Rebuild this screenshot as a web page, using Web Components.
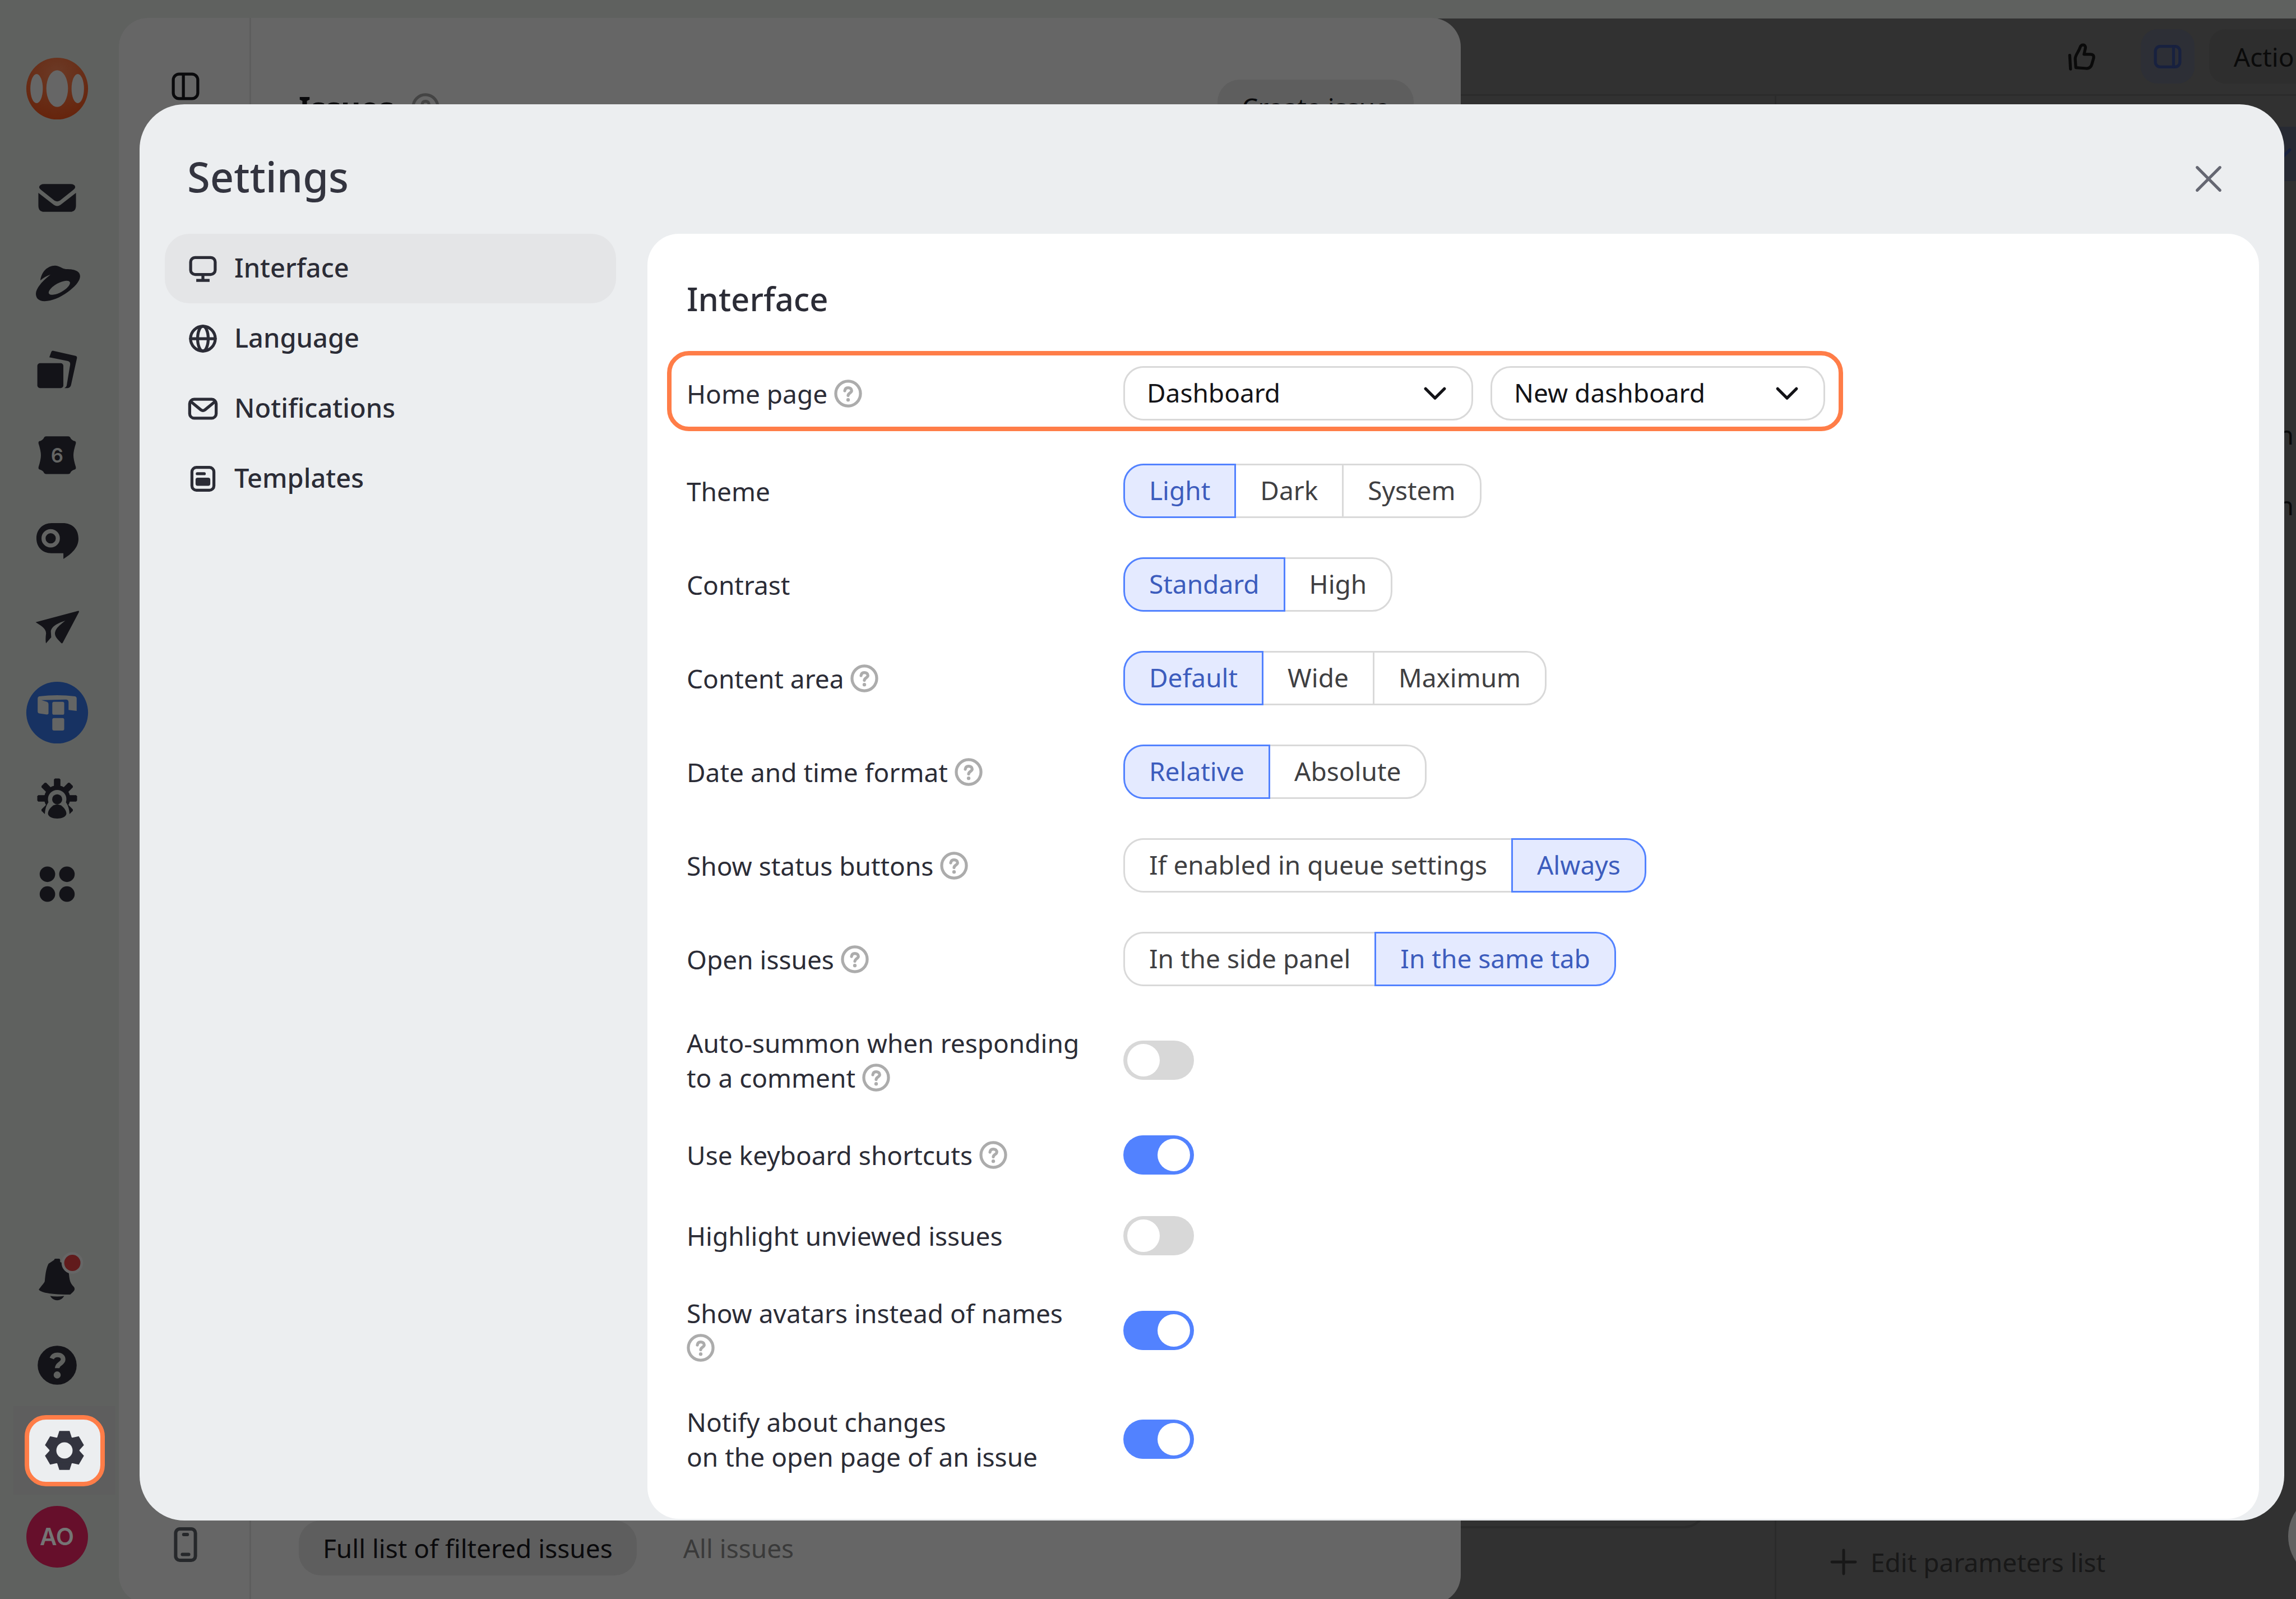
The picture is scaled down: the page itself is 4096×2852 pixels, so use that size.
<!DOCTYPE html>
<html lang="en">
<head>
<meta charset="utf-8">
<title>Settings</title>
<style>
  html, body {
    height: 100%;
    margin: 0;
  }
  body {
    --ink: #2b2c36;
    --rail: #5f615f;
    --line: #d9d9d9;
    --accent: #5282ff;
    --mark: #ff7d48;
    position: relative;
    display: flex;
    overflow: hidden;
    background: var(--rail);
    color: var(--ink);
    font: 46px/62px "Noto Sans", "Open Sans", sans-serif;
  }
</style>
</head>
<body>
  <app-rail></app-rail>
  <issues-drawer></issues-drawer>
  <issue-page></issue-page>

  <settings-dialog heading="Settings">
    <settings-nav slot="nav">
      <nav-item icon="display" active>Interface</nav-item>
      <nav-item icon="globe">Language</nav-item>
      <nav-item icon="envelope">Notifications</nav-item>
      <nav-item icon="template">Templates</nav-item>
    </settings-nav>

    <settings-section heading="Interface">
      <setting-select label="Home page" help highlighted options="Dashboard|New dashboard"></setting-select>
      <setting-radio label="Theme" options="Light|Dark|System" value="Light"></setting-radio>
      <setting-radio label="Contrast" options="Standard|High" value="Standard"></setting-radio>
      <setting-radio label="Content area" help options="Default|Wide|Maximum" value="Default"></setting-radio>
      <setting-radio label="Date and time format" help options="Relative|Absolute" value="Relative"></setting-radio>
      <setting-radio label="Show status buttons" help options="If enabled in queue settings|Always" value="Always"></setting-radio>
      <setting-radio label="Open issues" help options="In the side panel|In the same tab" value="In the same tab"></setting-radio>
      <setting-switch label="Auto-summon when responding to a comment" help></setting-switch>
      <setting-switch label="Use keyboard shortcuts" help checked></setting-switch>
      <setting-switch label="Highlight unviewed issues"></setting-switch>
      <setting-switch label="Show avatars instead of names" help checked></setting-switch>
      <setting-switch label="Notify about changes&#10;on the open page of an issue" checked></setting-switch>
    </settings-section>
  </settings-dialog>

<script>
// Line icons on a 16px grid.
const lineIcons = {
  display: '<rect x="1.75" y="2.4" width="12.5" height="8.6" rx="2.25"/><path d="M8 11v2.8M4.6 14h6.8" stroke-linecap="butt"/>',
  globe: '<circle cx="8" cy="8" r="6.3"/><ellipse cx="8" cy="8" rx="2.7" ry="6.3"/><path d="M1.7 8h12.6"/>',
  envelope: '<rect x="1.25" y="3.2" width="13.5" height="9.6" rx="2.25"/><path d="M2 4.5 7 8.6q1 .7 2 0L14 4.5"/>',
  template: '<rect x="2.4" y="2.2" width="11.2" height="11.6" rx="2.25"/><path d="M5.1 5.4h3.6"/><rect x="5" y="8.2" width="6" height="2.6" rx=".3" fill="currentColor"/>',
  panelLeft: '<rect x="1.75" y="1.75" width="12.5" height="12.5" rx="3"/><path d="M6.9 2v12"/>',
  panelRight: '<rect x="1.75" y="2.75" width="12.5" height="10.5" rx="2.5"/><path d="M11 3v10"/>',
  phone: '<rect x="3.6" y="1" width="8.8" height="14" rx="1.9"/><path d="M7.2 3.5h1.6M6.6 12.4h2.8"/>',
  thumb: '<path d="M2.1 7.3l.4 7"/><path d="M5.2 13.6 4.9 9.2C4.9 7 6.8 5.5 7.4 3.2c.5-1.7 3-1.5 2.7.4l-.7 3.2h3.2c1.4 0 2 .8 1.6 2.2l-.8 2.8c-.4 1.5-1.4 2.3-2.9 2.2z"/>',
  close: '<path d="M2.2 2.2l11.6 11.6M13.8 2.2 2.2 13.8" stroke-width="1.5"/>',
  chevron: '<path d="M3.2 5.8 8 10.6l4.8-4.8"/>',
  plus: '<path d="M8 2v12M2 8h12" stroke-width="1.4"/>',
  help: '<circle cx="8" cy="8" r="6.3"/><path d="M6.3 6.6C6.4 5.5 7.1 5 8 5s1.8.6 1.8 1.5C9.8 7.7 8.1 7.7 8 9"/><circle cx="8" cy="11.2" r=".9" fill="currentColor" stroke="none"/>',
};

const icon = name => `
  <svg class="icon" viewBox="0 0 16 16" aria-hidden="true" fill="none" stroke="currentColor"
    stroke-width="1.5" stroke-linecap="round" stroke-linejoin="round">${lineIcons[name]}</svg>
`;

const teeth = (angles, points) =>
  angles.map(a => `<polygon points="${points}" transform="rotate(${a} 60 60)"/>`).join('');

// Filled service icons on a 120px grid.
const railIcons = {
  logo: `
    <radialGradient id="g" cx=".5" cy=".25" r=".75"><stop offset="0" stop-color="#6b3a26"/><stop offset="1" stop-color="#66240c"/></radialGradient>
    <circle cx="60" cy="60" r="57" fill="url(#g)"/>
    <g fill="#666"><ellipse cx="60" cy="60" rx="20" ry="34"/><ellipse cx="22" cy="60" rx="11.5" ry="27"/><ellipse cx="98" cy="60" rx="11.5" ry="27"/></g>`,
  mail: `
    <path d="M36 34.3H84Q93 34.3 93.3 40 93 43 90 45L65 65Q60 68 55 65L30 45Q27 43 26.7 40 28 34.3 36 34.3Z"/>
    <path d="M25.3 50.7 54 73Q60 77 66 73L94.7 50.7V74Q94.7 85.7 84 85.7H36Q25.3 85.7 25.3 74Z"/>`,
  disk: `
    <path d="M29 54C31 38 42 27 56 26.7 64 26.7 70 33 76 33 86 33 102 34 102.3 46 102 56 92 66 80 75 65 86 50 92 36.7 92.3 26 92 20.7 87 20.7 78.3 21 68 33 55 47.7 43.3Q37 47 29 54Z"/>
    <ellipse cx="64" cy="67.5" rx="22" ry="8.5" transform="rotate(-29 64 67.5)" fill="#5f615f"/>`,
  docs: `
    <rect x="23.4" y="48.4" width="48" height="46" rx="5"/>
    <path d="M45.5 37.5 49 28Q50 25 53 25.5L94 35Q97 36 96.5 39L85.5 89Q84 94.3 79 94.3H73.5Q76.5 93 77.5 90L84 51Q84.5 46 80 44.5Z"/>`,
  calendar: `
    <path d="M40 25.2H80Q84 25.5 85 29 89 34 93 34 95 35 94.5 38 90 52 90 60 90 68 94.5 82 95 85 93 86 88 87 85 91 84 94.7 80 94.7H40Q36 94.5 35 91 32 87 27 86 25 85 25.5 82 30 68 30 60 30 52 25.5 38 25 35 27 34 31 34 35 29 36 25.5 40 25.2Z"/>
    <text x="60" y="73" text-anchor="middle" font-family="Inter" font-weight="600" font-size="36" fill="#646564">6</text>`,
  chat: `
    <path d="M50 27H70C88 27 99.3 38 99.3 56 99.3 72 86 84 71.5 93V82.4H49C33 82.4 21.7 71 21.7 55 21.7 39 33 27 50 27Z"/>
    <circle cx="48" cy="55" r="13.2" fill="none" stroke="#626362" stroke-width="7.5"/>`,
  plane: `
    <path d="M20.3 51.5 99 30.5Q101 30.5 100 33L70.5 89Q69 92 67 89.5C60 82 53 76 57 67 60 60 67 55 75 48.5 64 52 50 58 48.3 68L49 79.5 39.3 90.5Q38 84 39.5 72C39.5 62 28 57 20.3 51.5Z"/>`,
  tracker: `
    <circle cx="60" cy="60" r="57" fill="#173262"/>
    <g fill="#646564"><path d="M27 30Q60 26 93 30 96 31 96 34V57L81 55V41Q81 36 76 36L31 37 41 40Q44 41 44 45V61Q44 63.5 41 63.5L27 61.5Q24 61 24 58V34Q24 31 27 30Z"/>
    <rect x="51" y="40" width="22" height="24" rx="3"/><rect x="51" y="70" width="22" height="23" rx="3"/></g>`,
  people: `
    <circle cx="60" cy="60" r="24"/>
    ${teeth([0, 45, 90, 135, 225, 270, 315], '54,40 54,25 56,23.3 64,23.3 66,25 66,40')}
    <g fill="#5f615f"><circle cx="60" cy="61.5" r="17"/><path d="M45 66C38 74 37 84 37 99H83C83 84 82 74 75 66Z"/></g>
    <circle cx="60" cy="61.7" r="9.3"/><path d="M60 71C69 71 77 81 77 88 77 94 68 97.3 60 97.3 52 97.3 43 94 43 88 43 81 51 71 60 71Z"/>`,
  apps: '<circle cx="42" cy="41.7" r="14.3"/><circle cx="78" cy="41.7" r="14.3"/><circle cx="42" cy="78.3" r="14.3"/><circle cx="78" cy="78.3" r="14.3"/>',
  bell: `
    <path d="M54.5 24Q54.5 21.6 57 21.6H63Q65.5 21.6 65.5 24V28C76 31 80 39 81.5 48 83 64 85 68 91 74 94 79 91 82 84 88 36 88 29 82 26 79 29 74 35 68 37 64 38.5 48 40 39 44 31 54.5 28Z"/>
    <path d="M47 90.5Q60 92.5 73 90.5 68 98.6 60 98.6 52 98.6 47 90.5Z"/>
    <circle cx="88" cy="29.6" r="17.5" fill="#611b1c" stroke="#666" stroke-width="5"/>`,
  question: `
    <circle cx="60" cy="60" r="36"/>
    <path d="M50 47.5C52 42.5 56 41 60.5 41 67 41 71 44.5 71 49.5 71 57 60 57.5 60 65.5" fill="none" stroke="#5f615f" stroke-width="8.5"/>
    <circle cx="60" cy="78" r="6.5" fill="#5f615f"/>`,
  gear: `
    <g fill="#33343f"><circle cx="60" cy="60" r="27.5"/>${teeth([0, 60, 120, 180, 240, 300], '46,38 50.5,24 69.5,24 74,38')}</g>
    <circle cx="60" cy="60" r="15" fill="#eceef0"/>`,
};

class BaseElement extends HTMLElement {
  connectedCallback() {
    if(this.shadowRoot) return;
    this.attachShadow({mode: 'open'});
    this.shadowRoot.innerHTML = this.template();
  }

  template() {
    return '<slot></slot>';
  }

  attr(name) {
    return this.getAttribute(name) || '';
  }

  get options() {
    return this.attr('options').split('|');
  }
}

class AppRail extends BaseElement {
  link(name, label) {
    return `<a href="#${name}" class="${name}" aria-label="${label}"><svg viewBox="0 0 120 120">${railIcons[name]}</svg></a>`;
  }

  template() {
    return `
      <style>
        :host {
          flex: none;
          display: flex;
          flex-direction: column;
          justify-content: space-between;
          box-sizing: border-box;
          width: 212px;
          padding: 81px 0 35px;
        }
        nav {
          display: flex;
          flex-direction: column;
        }
        a {
          display: flex;
          align-items: center;
          justify-content: center;
          height: 153px;
          margin-right: 9px;
          color: #131318;
          text-decoration: none;
        }
        svg {
          width: 116px;
          height: 116px;
          fill: currentColor;
        }
        .logo {
          margin-bottom: 42px;
        }
        .gear {
          box-sizing: border-box;
          height: 158px;
          margin: -3px 6px -2px 24px;
          background: #5e5e5e;
        }
        .gear span {
          display: flex;
          align-items: center;
          justify-content: center;
          box-sizing: border-box;
          width: 143px;
          height: 127px;
          border: 8px solid var(--mark);
          border-radius: 38px;
          background: #eceef0;
        }
        .avatar span {
          width: 110px;
          border-radius: 50%;
          background: #660f2b;
          color: #757575;
          font: 600 42px/110px Inter, sans-serif;
          text-align: center;
        }
      </style>
      <nav aria-label="Services">
        ${this.link('logo', 'Home')}
        ${this.link('mail', 'Mail')}
        ${this.link('disk', 'Disk')}
        ${this.link('docs', 'Documents')}
        ${this.link('calendar', 'Calendar')}
        ${this.link('chat', 'Messenger')}
        ${this.link('plane', 'Send')}
        ${this.link('tracker', 'Tracker')}
        ${this.link('people', 'Admin')}
        ${this.link('apps', 'All services')}
      </nav>
      <nav aria-label="Account">
        ${this.link('bell', 'Notifications')}
        ${this.link('question', 'Help')}
        <a href="#settings" class="gear" aria-label="Settings"><span><svg viewBox="0 0 120 120">${railIcons.gear}</svg></span></a>
        <a href="#account" class="avatar"><span>AO</span></a>
      </nav>
    `;
  }
}
customElements.define('app-rail', AppRail);

class IssuesDrawer extends BaseElement {
  template() {
    return `
      <style>
        :host {
          position: relative;
          z-index: 1;
          flex: 1;
          display: flex;
          margin: 32px 0 -9px;
          border-radius: 52px;
          background: #666;
          color: #0a0a0c;
        }
        .strip {
          display: flex;
          flex-direction: column;
          align-items: center;
          justify-content: space-between;
          box-sizing: border-box;
          width: 236px;
          padding: 94px 0 74px 5px;
          border-right: 3px solid #5d5d5d;
        }
        .icon {
          display: block;
          width: 56px;
          height: 56px;
        }
        .phone .icon {
          width: 64px;
          height: 64px;
          color: #26282b;
        }
        .main {
          flex: 1;
          display: flex;
          flex-direction: column;
          justify-content: space-between;
          padding: 110px 84px 51px 85px;
        }
        header, footer {
          display: flex;
          align-items: center;
        }
        h2 {
          margin: 0 28px 0 0;
          font-size: 54px;
        }
        header .icon {
          margin-right: auto;
          color: #444;
        }
        button {
          padding: 0;
          border: 0;
          background: none;
          color: inherit;
          font: inherit;
        }
        .flat {
          height: 98px;
          padding: 0 43px;
          border-radius: 40px;
          background: #5e5e5e;
        }
        .tab {
          margin-left: 83px;
          color: #3a3a3a;
        }
      </style>
      <div class="strip">
        <button aria-label="Toggle panel">${icon('panelLeft')}</button>
        <button class="phone" aria-label="Mobile app">${icon('phone')}</button>
      </div>
      <div class="main">
        <header>
          <h2>Issues</h2>
          ${icon('help')}
          <button class="flat">Create issue</button>
        </header>
        <footer>
          <button class="flat">Full list of filtered issues</button>
          <button class="tab">All issues</button>
        </footer>
      </div>
    `;
  }
}
customElements.define('issues-drawer', IssuesDrawer);

class IssuePage extends BaseElement {
  template() {
    return `
      <style>
        :host {
          position: relative;
          flex: none;
          display: flex;
          flex-direction: column;
          box-sizing: border-box;
          width: 1550px;
          margin: 33px 0 0 -60px;
          overflow: hidden;
          background: #313131;
          color: #0a0a0a;
        }
        button {
          border: 0;
          background: none;
          color: inherit;
          font: inherit;
        }
        .icon {
          flex: none;
          display: block;
          width: 56px;
          height: 56px;
        }
        header {
          display: flex;
          align-items: center;
          justify-content: flex-end;
          gap: 26px;
          height: 135px;
          margin-right: -91px;
          border-bottom: 3px solid #2b2b2b;
        }
        header button {
          display: flex;
          align-items: center;
          justify-content: center;
          height: 97px;
          padding: 0 20px;
          border-radius: 30px;
        }
        .like {
          margin-right: 32px;
        }
        .side {
          background: #2d2f36;
          color: #18213f;
        }
        .actions {
          padding: 0 44px;
          background: #2e2e2e;
        }
        .body {
          flex: 1;
          display: flex;
        }
        .card {
          flex: 1;
          margin: 100px 122px 126px 0;
          border: 4px solid #2b2b2b;
          border-top: 0;
          border-radius: 0 0 40px 0;
        }
        .params {
          display: flex;
          flex-direction: column;
          align-items: flex-end;
          box-sizing: border-box;
          width: 930px;
          padding: 55px 0 35px 92px;
          border-left: 3px solid #2b2b2b;
        }
        .status {
          display: flex;
          align-items: center;
          justify-content: flex-end;
          box-sizing: border-box;
          width: 100%;
          height: 97px;
          padding: 0;
          background: #272a33;
          color: #18213f;
        }
        .value {
          margin: 421px 4px 0;
        }
        .value + .value {
          margin-top: 64px;
        }
        .edit {
          display: flex;
          align-items: center;
          gap: 20px;
          margin: auto auto 0 0;
          padding: 0;
          color: #181818;
        }
        .round {
          position: absolute;
          right: -146px;
          bottom: 32px;
          width: 160px;
          height: 160px;
          border-radius: 50%;
          background: #626262;
        }
      </style>
      <header>
        <button class="like" aria-label="Like">${icon('thumb')}</button>
        <button class="side" aria-label="Side panel">${icon('panelRight')}</button>
        <button class="actions">Actions</button>
      </header>
      <div class="body">
        <div class="card"></div>
        <div class="params">
          <button class="status" aria-label="Status">${icon('chevron')}</button>
          <span class="value">n</span>
          <span class="value">n</span>
          <button class="edit">${icon('plus')}Edit parameters list</button>
        </div>
      </div>
      <button class="round" aria-label="Chat"></button>
    `;
  }
}
customElements.define('issue-page', IssuePage);

class SettingsDialog extends BaseElement {
  template() {
    return `
      <style>
        :host {
          position: absolute;
          z-index: 2;
          inset: 186px 21px 140px 249px;
          display: grid;
          grid-template-columns: 805px 1fr;
          grid-template-rows: 231px 1fr;
          box-sizing: border-box;
          padding: 0 45px 3px;
          column-gap: 56px;
          overflow: hidden;
          border-radius: 80px;
          background: #eceef0;
        }
        header {
          grid-column: 1 / -1;
          display: flex;
          align-items: center;
          justify-content: space-between;
          padding: 34px 57px 0 40px;
        }
        h1 {
          margin: 0;
          padding-bottom: 8px;
          color: #33343f;
          font-size: 74px;
          font-weight: 500;
        }
        button {
          padding: 5px;
          border: 0;
          background: none;
          color: #656772;
        }
        .icon {
          display: block;
          width: 56px;
          height: 56px;
        }
      </style>
      <header>
        <h1>${this.attr('heading')}</h1>
        <button aria-label="Close">${icon('close')}</button>
      </header>
      <slot name="nav"></slot>
      <slot></slot>
    `;
  }
}
customElements.define('settings-dialog', SettingsDialog);

class SettingsNav extends BaseElement {
  template() {
    return `
      <style>
        nav {
          display: flex;
          flex-direction: column;
          gap: 1px;
        }
      </style>
      <nav aria-label="Settings"><slot></slot></nav>
    `;
  }
}
customElements.define('settings-nav', SettingsNav);

class NavItem extends BaseElement {
  template() {
    return `
      <style>
        :host {
          display: block;
          border-radius: 44px;
          font-size: 47px;
          font-weight: 500;
        }
        :host([active]) {
          background: #e4e5e7;
        }
        a {
          display: flex;
          align-items: center;
          gap: 28px;
          height: 124px;
          padding: 0 40px;
          color: inherit;
          text-decoration: none;
        }
        span {
          padding-bottom: 4px;
        }
        .icon {
          width: 56px;
          height: 56px;
        }
      </style>
      <a href="#${this.attr('icon')}">${icon(this.attr('icon'))}<span><slot></slot></span></a>
    `;
  }
}
customElements.define('nav-item', NavItem);

class SettingsSection extends BaseElement {
  template() {
    return `
      <style>
        :host {
          display: block;
          padding: 76px 70px 0;
          border-radius: 56px;
          background: #fff;
        }
        h2 {
          margin: 0 0 80px;
          font-size: 58px;
          line-height: 80px;
          font-weight: 500;
        }
        div {
          display: flex;
          flex-direction: column;
          align-items: flex-start;
          gap: 70px;
        }
      </style>
      <h2>${this.attr('heading')}</h2>
      <div><slot></slot></div>
    `;
  }
}
customElements.define('settings-section', SettingsSection);

// A row with its label on the left; subclasses supply the control.
class SettingRow extends BaseElement {
  template() {
    const help = this.hasAttribute('help') ? ` <button class="help" aria-label="Help">${icon('help')}</button>` : '';
    return `
      <style>
        :host {
          display: grid;
          grid-template-columns: 720px auto;
          column-gap: 59px;
          align-items: center;
        }
        .label {
          white-space: pre-line;
        }
        .help {
          display: inline-flex;
          align-items: center;
          height: 62px;
          margin-left: -3px;
          padding: 0;
          border: 0;
          background: none;
          color: #acacac;
          vertical-align: top;
        }
        .help .icon {
          width: 56px;
          height: 56px;
        }
        ${this.styles()}
      </style>
      <div class="label">${this.labelTag()}${help}</div>
      ${this.control()}
    `;
  }

  labelTag() {
    return `<label for="control">${this.attr('label')}</label>`;
  }
}

class SettingSelect extends SettingRow {
  styles() {
    return `
      :host([highlighted]) {
        margin: -27px 0 -12px -35px;
        padding: 19px 24px 11px 27px;
        border: 8px solid var(--mark);
        border-radius: 39px;
      }
      .group {
        display: flex;
        gap: 31px;
      }
      .box {
        position: relative;
        width: 597px;
      }
      .box:first-child {
        width: 624px;
      }
      select {
        appearance: none;
        display: block;
        width: 100%;
        height: 97px;
        padding: 0 42px 3px 39px;
        border: 3px solid var(--line);
        border-radius: 36px;
        background: #fff;
        color: #131317;
        font: inherit;
      }
      .box .icon {
        position: absolute;
        top: 20px;
        right: 40px;
        width: 56px;
        height: 56px;
        color: #131317;
        pointer-events: none;
      }
    `;
  }

  control() {
    return `<div class="group">${this.options.map((text, i) => `
      <div class="box">
        <select ${i ? `aria-label="${this.attr('label')} item"` : 'id="control"'}><option>${text}</option></select>
        ${icon('chevron')}
      </div>`).join('')}</div>`;
  }
}
customElements.define('setting-select', SettingSelect);

class SettingRadio extends SettingRow {
  labelTag() {
    return `<span id="caption">${this.attr('label')}</span>`;
  }

  styles() {
    return `
      .group {
        display: flex;
      }
      .group label {
        position: relative;
        box-sizing: border-box;
        height: 97px;
        margin-left: -3px;
        padding: 0 43px;
        border: 3px solid var(--line);
        color: #3f3f42;
        line-height: 88px;
        white-space: nowrap;
      }
      .group label:first-child {
        margin-left: 0;
        border-radius: 36px 0 0 36px;
      }
      .group label:last-child {
        border-radius: 0 36px 36px 0;
      }
      .group label:has(:checked) {
        z-index: 1;
        border-color: var(--accent);
        background: #e4eaff;
        color: #3c5cbd;
      }
      input {
        appearance: none;
        position: absolute;
        inset: 0;
        margin: 0;
      }
    `;
  }

  control() {
    return `<div class="group" role="radiogroup" aria-labelledby="caption">${this.options.map(text => `
      <label><input type="radio" name="choice" ${text === this.attr('value') ? 'checked' : ''}>${text}</label>`).join('')}</div>`;
  }
}
customElements.define('setting-radio', SettingRadio);

class SettingSwitch extends SettingRow {
  styles() {
    return `
      :host {
        min-height: 74px;
      }
      input {
        appearance: none;
        width: 126px;
        height: 70px;
        margin: 0;
        padding: 6px 7px;
        border-radius: 35px;
        background: #d8d8d8;
      }
      input::before {
        content: '';
        display: block;
        width: 58px;
        height: 58px;
        border-radius: 50%;
        background: #fff;
      }
      input:checked {
        background: var(--accent);
      }
      input:checked::before {
        margin-left: auto;
      }
    `;
  }

  control() {
    return `<input type="checkbox" role="switch" id="control" ${this.hasAttribute('checked') ? 'checked' : ''}>`;
  }
}
customElements.define('setting-switch', SettingSwitch);
</script>
</body>
</html>
